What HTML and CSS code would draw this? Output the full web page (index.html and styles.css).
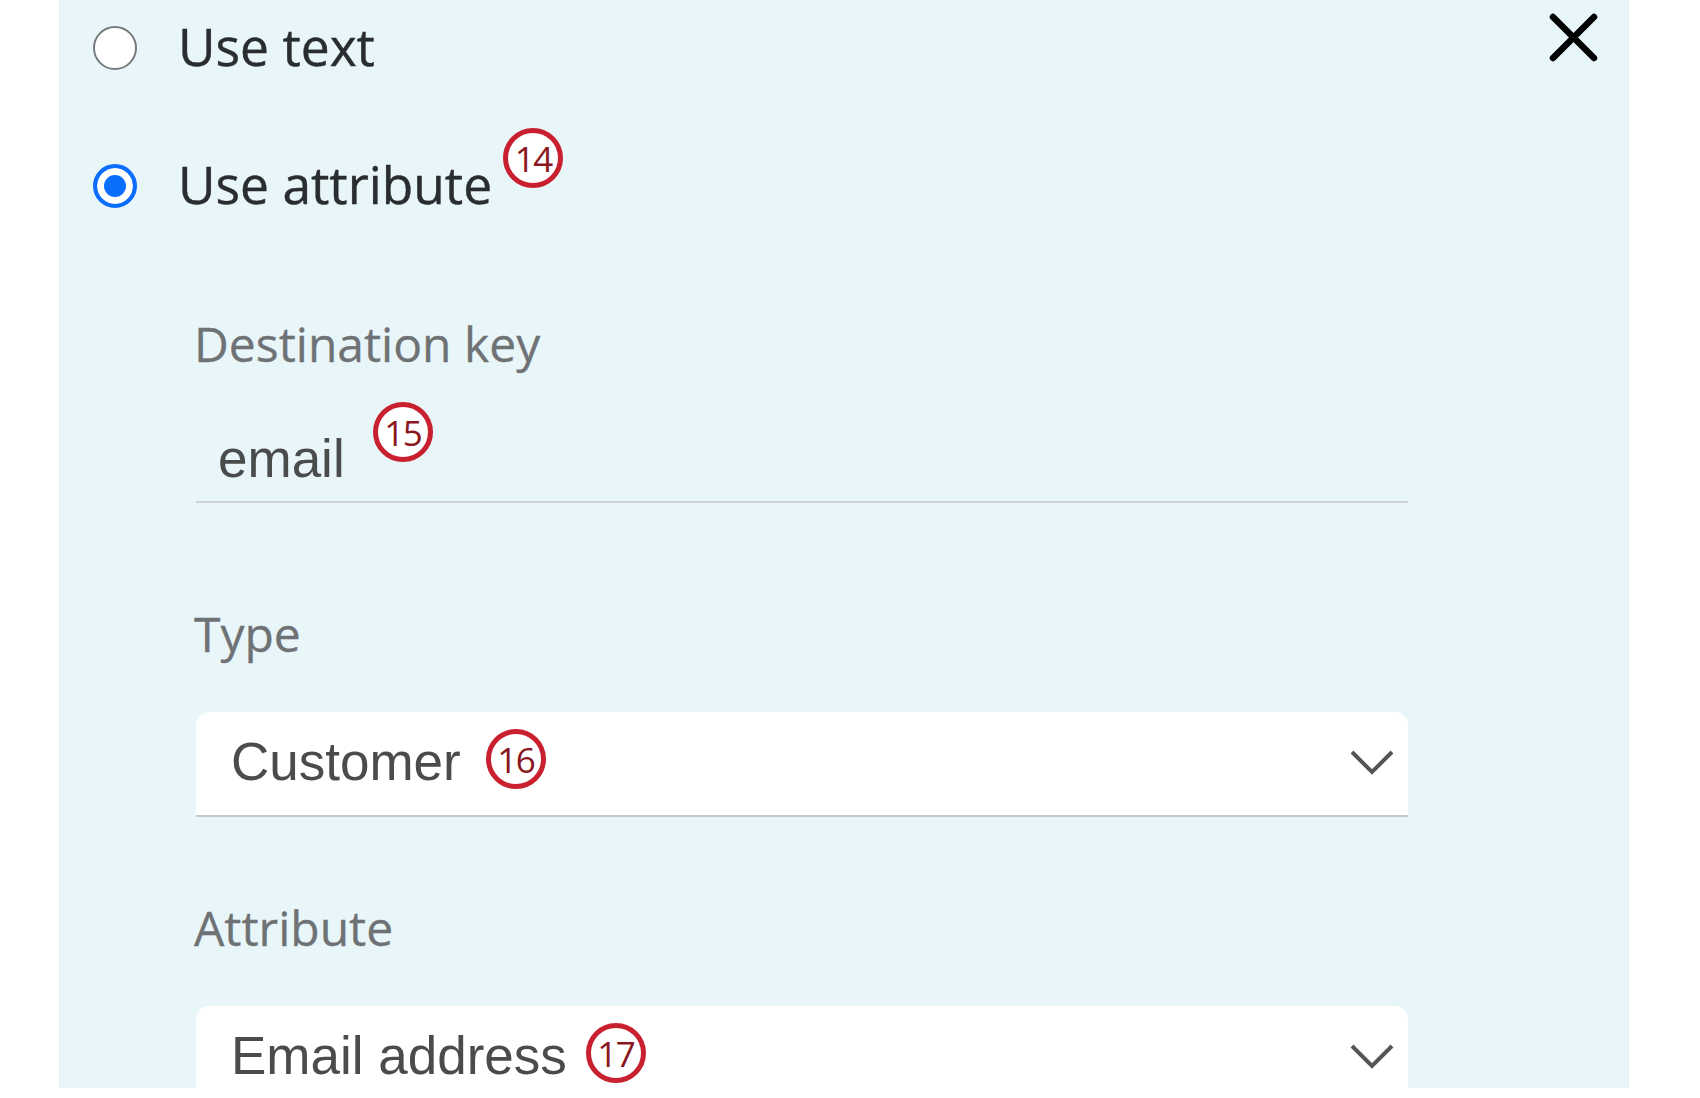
FILE: index.html
```html
<!DOCTYPE html>
<html lang="en">
<head>
<meta charset="utf-8">
<title>Destination key settings</title>
<link rel="stylesheet" href="styles.css">
</head>
<body>
<div class="panel">
  <div class="radio-row">
    <span class="radio"></span>
    <span class="radio-label">Use text</span>
    <button class="close" aria-label="Close">
      <svg width="49" height="49" viewBox="0 0 49 49"><path d="M4 4 L45 45 M45 4 L4 45" stroke="#000" stroke-width="6.5" stroke-linecap="round" fill="none"/></svg>
    </button>
  </div>
  <div class="radio-row second">
    <span class="radio checked"></span>
    <span class="radio-label">Use attribute</span>
    <span class="badge badge-top">14</span>
  </div>

  <div class="fields">
    <div class="field-label first">Destination key</div>
    <div class="text-input">
      <span class="value">email</span>
      <span class="badge badge-input">15</span>
    </div>

    <div class="field-label gap-lg">Type</div>
    <div class="select">
      <span class="value">Customer</span>
      <span class="badge badge-select">16</span>
      <svg class="chevron" width="44" height="26" viewBox="0 0 44 26"><path d="M2 3 L22 23 L42 3" stroke="#555" stroke-width="4" fill="none"/></svg>
    </div>

    <div class="field-label gap-md">Attribute</div>
    <div class="select">
      <span class="value">Email address</span>
      <span class="badge badge-select tight">17</span>
      <svg class="chevron" width="44" height="26" viewBox="0 0 44 26"><path d="M2 3 L22 23 L42 3" stroke="#555" stroke-width="4" fill="none"/></svg>
    </div>
  </div>
</div>
</body>
</html>
```
FILE: styles.css
```css
html, body {
  margin: 0;
  padding: 0;
  background: #ffffff;
}

.panel {
  box-sizing: border-box;
  margin-left: 59px;
  width: 1570px;
  height: 1088px;
  overflow: hidden;
  background: #e8f6fa;
  padding: 16px 31px 0 34px;
  font-family: "Open Sans", "Noto Sans", sans-serif;
}

.radio-row {
  display: flex;
  align-items: center;
  line-height: 60px;
  height: 60px;
}

.radio-row.second {
  margin-top: 78px;
}

.radio {
  box-sizing: border-box;
  width: 44px;
  height: 44px;
  flex: none;
  border-radius: 50%;
  border: 2.5px solid #777a7c;
  background: #ffffff;
  margin-right: 41px;
  margin-top: 3px;
}

.radio.checked {
  border: 4px solid #0b6efd;
  background: #0b6efd;
  box-shadow: inset 0 0 0 7px #ffffff;
}

.radio-label {
  font-size: 51.5px;
  color: #2a2d30;
  -webkit-text-stroke: 0.4px #2a2d30;
}

.close {
  margin-left: auto;
  align-self: flex-start;
  margin-top: -3px;
  padding: 0;
  border: 0;
  background: none;
  width: 49px;
  height: 49px;
  display: block;
}

.close svg {
  display: block;
}

.badge {
  box-sizing: border-box;
  flex: none;
  width: 60px;
  height: 60px;
  border-radius: 50%;
  border: 5.5px solid #c8202e;
  background: #ffffff;
  color: #8a1620;
  font-family: "Open Sans", "Noto Sans", sans-serif;
  font-size: 35px;
  line-height: 1;
  display: flex;
  align-items: center;
  justify-content: center;
  letter-spacing: -1.5px;
}

.badge-top {
  align-self: flex-start;
  margin-top: -26px;
  margin-left: 11px;
}

.fields {
  margin-left: 103px;
  width: 1212px;
}

.field-label {
  font-size: 48px;
  line-height: 56px;
  color: #6f7274;
  margin-left: -2px;
  -webkit-text-stroke: 0.3px #6f7274;
}

.field-label.first {
  margin-top: 102px;
}

.field-label.gap-lg {
  margin-top: 103px;
}

.field-label.gap-md {
  margin-top: 83px;
}

.text-input {
  display: flex;
  align-items: flex-start;
  margin-top: 57px;
  padding: 0 0 12px 22px;
  border-bottom: 2px solid #cfd3d6;
  font-family: "Liberation Sans", Arial, sans-serif;
  font-size: 53px;
  line-height: 60px;
  color: #4a4b4c;
}

.badge-input {
  margin-top: -27px;
  margin-left: 28px;
}

.select {
  display: flex;
  align-items: center;
  margin-top: 50px;
  background: #ffffff;
  border-radius: 13px 13px 0 0;
  border-bottom: 2px solid #c6c9cc;
  padding: 20px 14px 23px 35px;
  font-family: "Liberation Sans", Arial, sans-serif;
  font-size: 53px;
  line-height: 60px;
  color: #4a4b4c;
}

.badge-select {
  margin-left: 25px;
  margin-top: -6px;
}

.badge-select.tight {
  margin-left: 19px;
}

.chevron {
  margin-left: auto;
  display: block;
  flex: none;
}
```
